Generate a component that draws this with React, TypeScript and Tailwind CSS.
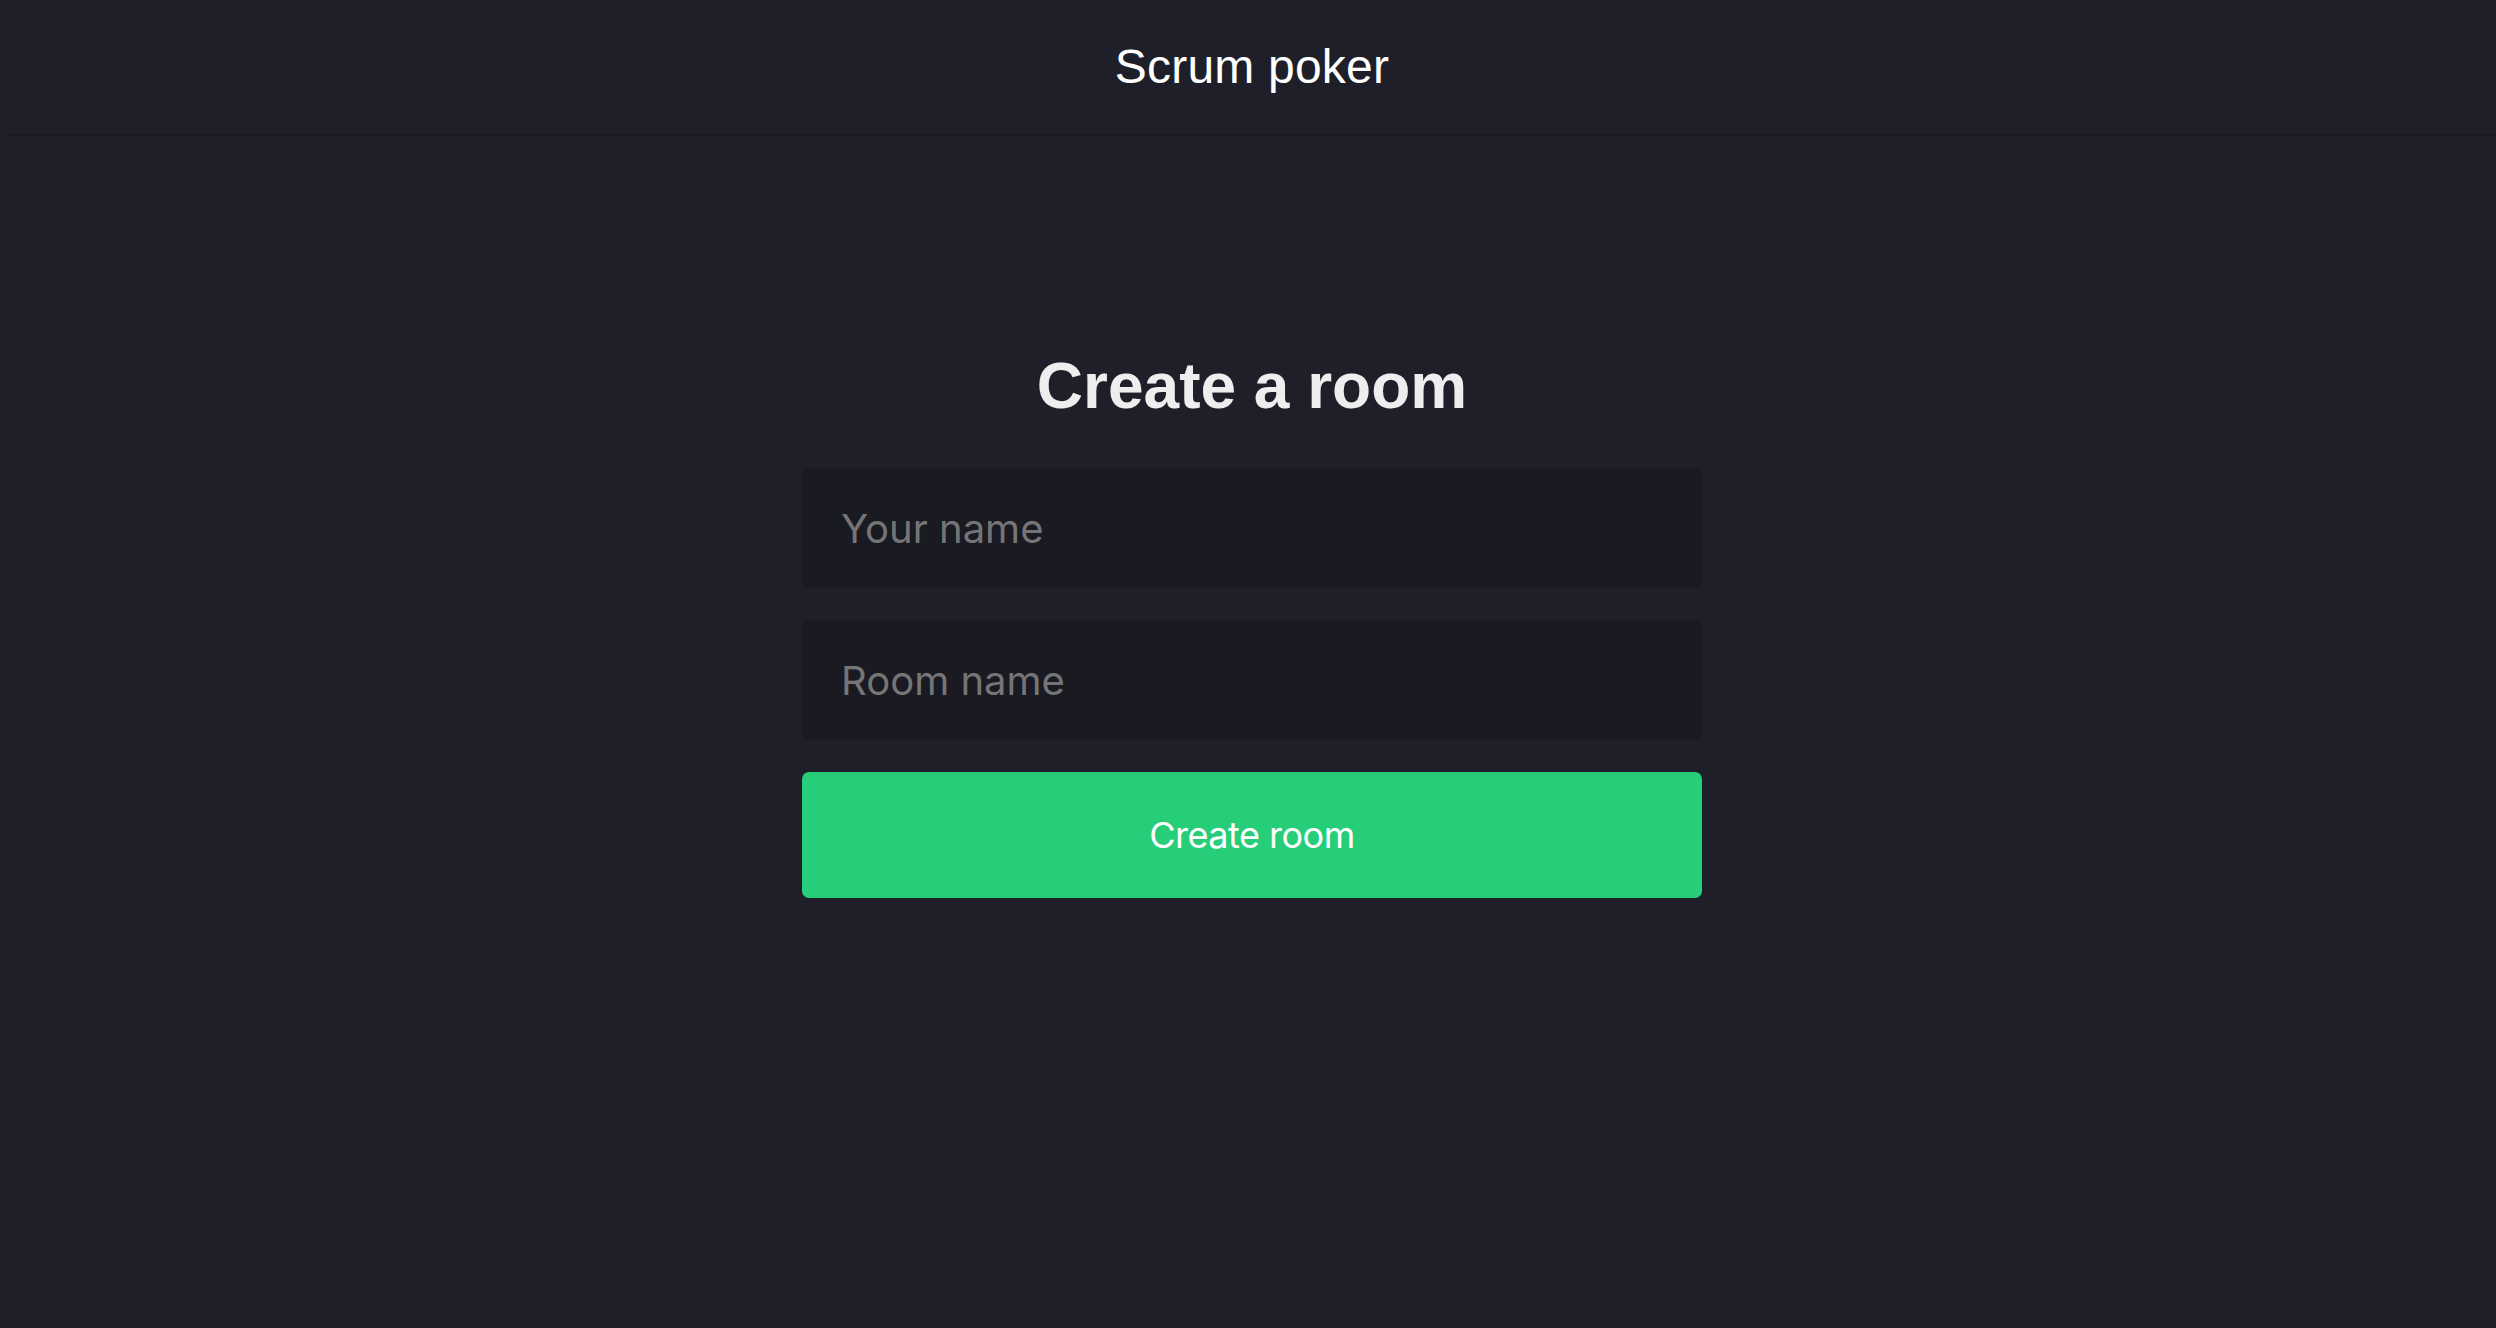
import React from "react";

export default function App() {
  return (
    <div className="min-h-screen w-full bg-[#1f1f29] flex flex-col pl-[8px]">
      <header className="h-[136px] flex items-center justify-center border-b-2 border-[#1b1b23]">
        <h1 className="text-[48px] text-white font-normal tracking-[0.2px]" style={{ fontFamily: '"Liberation Sans", Arial, sans-serif' }}>
          Scrum poker
        </h1>
      </header>
      <main className="flex flex-col items-center pt-[210px]">
        <div className="w-[900px] flex flex-col">
          <h2
            className="text-[64px] leading-[80px] font-bold text-[#eeeeee] text-center"
            style={{ fontFamily: '"Liberation Sans", Arial, sans-serif' }}
          >
            Create a room
          </h2>
          <form className="mt-[42px] flex flex-col gap-[32px]" onSubmit={(e) => e.preventDefault()}>
            <input
              type="text"
              placeholder="Your name"
              className="h-[120px] w-full rounded-[7px] bg-[#1a1a22] px-[39px] text-[40px] text-white placeholder:text-[#757575] outline-none"
              style={{ fontFamily: 'Inter, "Noto Sans", sans-serif' }}
            />
            <input
              type="text"
              placeholder="Room name"
              className="h-[120px] w-full rounded-[7px] bg-[#1a1a22] px-[39px] text-[40px] text-white placeholder:text-[#757575] outline-none"
              style={{ fontFamily: 'Inter, "Noto Sans", sans-serif' }}
            />
            <button
              type="submit"
              className="h-[126px] w-full rounded-[7px] bg-[#27ce79] text-[36px] text-white tracking-[-0.5px]"
              style={{ fontFamily: 'Inter, "Noto Sans", sans-serif' }}
            >
              Create room
            </button>
          </form>
        </div>
      </main>
    </div>
  );
}
